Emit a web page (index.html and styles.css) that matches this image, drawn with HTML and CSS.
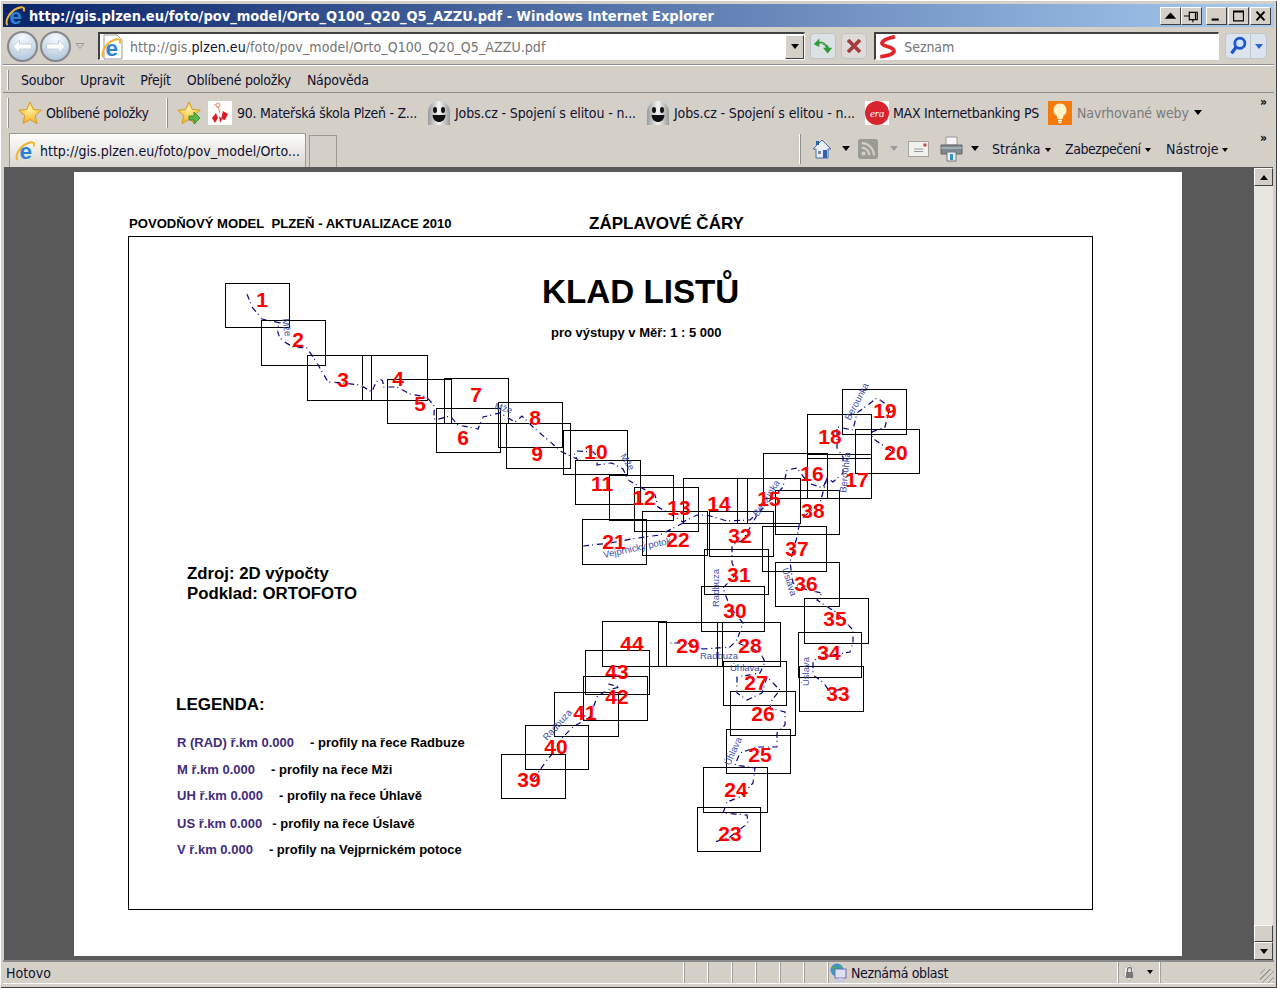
FILE: index.html
```html
<!DOCTYPE html>
<html>
<head>
    <title>http://gis.plzen.eu/foto/pov_model/Orto_Q100_Q20_Q5_AZZU.pdf - Windows Internet Explorer</title>
    <link rel="stylesheet" href="styles.css">
</head>
<body>
<svg class="icon-defs" width="0" height="0">
    <defs>
        <radialGradient id="ball" cx="50%" cy="20%" r="85%"><stop offset="0" stop-color="#f6f9fd"/><stop offset=".55" stop-color="#cfdcea"/><stop offset="1" stop-color="#a9c0d6"/></radialGradient>
        <radialGradient id="gold" cx="50%" cy="35%" r="70%"><stop offset="0" stop-color="#fff2a0"/><stop offset="1" stop-color="#f3a91a"/></radialGradient>
        <linearGradient id="ghost" x1="0" x2="1"><stop offset="0" stop-color="#9a9a9a"/><stop offset=".5" stop-color="#f4f4f4"/><stop offset="1" stop-color="#9a9a9a"/></linearGradient>
        <symbol id="ie" viewBox="0 0 24 24">
            <text x="13" y="21" class="ie-glyph">e</text>
            <path d="M3 23C-1 17 7 4 19 1.500c4-.5 4.500 2 3.500 5" fill="none" stroke="#eeb52e" stroke-width="2.400"/>
        </symbol>
        <symbol id="back" viewBox="0 0 31 31">
            <circle cx="15.500" cy="15.500" r="14.500" fill="url(#ball)" stroke="#85878a" stroke-width="2"/>
            <path d="M6 15.500l6.500-6.500v4h12v5h-12v4z" fill="#fff" stroke="#b8c6d4" stroke-width=".8"/>
        </symbol>
        <symbol id="star" viewBox="0 0 24 24">
            <path d="M12 1l3.300 7.400 8 .8-6 5.400 1.700 8L12 18.500l-7 4.100 1.700-8-6-5.400 8-.8z" fill="url(#gold)" stroke="#d79a26"/>
        </symbol>
        <symbol id="ghost-face" viewBox="0 0 24 24">
            <rect width="24" height="24" fill="#cfcfcb"/>
            <path d="M1 24V11a11 11 0 0 1 22 0v13z" fill="url(#ghost)"/>
            <ellipse cx="8" cy="9" rx="2" ry="3" fill="#111"/><ellipse cx="16" cy="9" rx="2" ry="3" fill="#111"/>
            <path d="M5.500 14h13c-.5 5-3.500 7-6.500 7s-6-2-6.500-7z" fill="#111"/>
        </symbol>
    </defs>
</svg>

<div class="window">
    <div class="titlebar">
        <svg class="title-ie"><use href="#ie"/></svg>
        <span class="title-text">http://gis.plzen.eu/foto/pov_model/Orto_Q100_Q20_Q5_AZZU.pdf - Windows Internet Explorer</span>
        <div class="caption-group">
            <button class="caption-btn"><svg viewBox="0 0 21 18"><path d="M4 12l6.500-7 6.500 7z" fill="#000"/></svg></button>
            <button class="caption-btn"><svg viewBox="0 0 21 18"><path d="M2 9h6M8 4v10M8 5h9v8H8M12 13v3M15 5v8" fill="none" stroke="#000" stroke-width="1.300"/></svg></button>
        </div>
        <div class="caption-group caption-group-wide">
            <button class="caption-btn"><svg viewBox="0 0 21 18"><path d="M5 13h8" stroke="#000" stroke-width="2.400"/></svg></button>
            <button class="caption-btn"><svg viewBox="0 0 21 18"><path d="M5 3.500h11v11H5zM5 4.500h11" fill="none" stroke="#000" stroke-width="1.300"/></svg></button>
            <button class="caption-btn"><svg viewBox="0 0 21 18"><path d="M6 4l9 10M15 4l-9 10" stroke="#000" stroke-width="2.200"/></svg></button>
        </div>
    </div>

    <div class="address-row">
        <svg class="nav-ball"><use href="#back"/></svg>
        <svg class="nav-ball nav-forward"><use href="#back"/></svg>
        <svg class="nav-chevron" viewBox="0 0 10 8"><path d="M1 1.500l4 5 4-5z" fill="#d4d0c8" stroke="#999"/></svg>
        <div class="address-box">
            <svg class="address-ie" viewBox="0 0 24 26">
                <path d="M3 1h13l5 5v19H3z" fill="#fff" stroke="#999"/>
                <use href="#ie" x="0" y="4" width="20" height="20"/>
            </svg>
            <span class="address-url">http://gis.<b>plzen.eu</b>/foto/pov_model/Orto_Q100_Q20_Q5_AZZU.pdf</span>
            <span class="address-drop"><i class="arrow-down"></i></span>
        </div>
        <button class="soft-btn">
            <svg viewBox="0 0 26 26">
                <path d="M3 11l6-6v3.500c3 0 6 .5 7 3-2-1-4-1.500-7-1V14z" fill="#2e9c35"/>
                <path d="M23 15l-5 6-5-6h3c0-2-1-3-4-4 4-.5 7 1 7.500 4z" fill="#2e9c35"/>
            </svg>
        </button>
        <button class="soft-btn soft-btn-stop">
            <svg viewBox="0 0 26 26"><path d="M6.500 6.500l13 13M19.500 6.500l-13 13" stroke="#a63a3c" stroke-width="4"/></svg>
        </button>
        <div class="search-box">
            <svg class="seznam-logo" viewBox="0 0 24 28"><path d="M20 2C12 4 5 6 5 9.500c0 4 14 4 14 9 0 4-8 6-16 7" fill="none" stroke="#e2242b" stroke-width="4.500"/></svg>
            <span class="search-text">Seznam</span>
        </div>
        <div class="search-btn">
            <svg viewBox="0 0 26 26"><circle cx="15" cy="10" r="5.500" fill="#cfe2ff" stroke="#1b55d0" stroke-width="3"/><path d="M11 14l-5 7" stroke="#1b55d0" stroke-width="3.600"/></svg>
            <span class="search-drop"><i class="arrow-down arrow-blue"></i></span>
        </div>
    </div>

    <div class="menu-row">
        <i class="grip"></i>
        <span>Soubor</span><span>Upravit</span><span>Přejít</span><span>Oblíbené položky</span><span>Nápověda</span>
    </div>

    <div class="favorites-row">
        <i class="grip grip-tall"></i>
        <div class="fav-item"><svg class="fav-icon"><use href="#star"/></svg><span>Oblíbené položky</span></div>
        <i class="grip grip-tall"></i>
        <svg class="fav-icon" viewBox="0 0 24 24">
            <use href="#star"/>
            <path d="M12 15h5v-4l6 6-6 6v-4h-5z" fill="#58b84a" stroke="#2f7f2a" stroke-width=".8"/>
        </svg>
        <div class="fav-item fav-narrow">
            <svg class="fav-icon" viewBox="0 0 24 24">
                <rect width="24" height="24" fill="#fff"/>
                <circle cx="10" cy="4" r="2" fill="none" stroke="#e98a6a"/>
                <path d="M10 6l2 6M6 3l4 4" stroke="#e98a6a"/>
                <path d="M8 12l-4 5 3 5 3-5zM15 10l-2 8 4 1 3-6zM11 15l1 7 2-4z" fill="#d8202a"/>
            </svg>
            <span>90. Mateřská škola Plzeň - Z...</span>
        </div>
        <div class="fav-item fav-tight"><svg class="fav-icon"><use href="#ghost-face"/></svg><span>Jobs.cz - Spojení s elitou - n...</span></div>
        <div class="fav-item fav-tight"><svg class="fav-icon"><use href="#ghost-face"/></svg><span>Jobs.cz - Spojení s elitou - n...</span></div>
        <div class="fav-item fav-tight fav-narrow">
            <svg class="fav-icon" viewBox="0 0 24 24">
                <rect width="24" height="24" fill="#fff"/>
                <circle cx="12" cy="12" r="12" fill="#d9232e"/>
                <text x="12" y="15.500" class="era-text">era</text>
            </svg>
            <span>MAX Internetbanking PS</span>
        </div>
        <div class="fav-item fav-muted">
            <svg class="fav-icon" viewBox="0 0 24 24">
                <rect width="24" height="24" fill="#f5780a"/>
                <path d="M12 2.500a6.500 6.500 0 0 0-3.500 12l1 3.500h5l1-3.500a6.500 6.500 0 0 0-3.500-12z" fill="#fff3c8"/>
                <path d="M10 19.500h4M10.500 21.500h3" stroke="#fff" stroke-width="1.400"/>
            </svg>
            <span>Navrhované weby</span>
            <i class="arrow-down"></i>
        </div>
        <span class="more-mark">»</span>
    </div>

    <div class="tabs-row">
        <div class="tab"><svg class="tab-ie"><use href="#ie"/></svg><span>http://gis.plzen.eu/foto/pov_model/Orto...</span></div>
        <div class="tab-new"></div>
        <div class="commands">
            <i class="grip grip-tall"></i>
            <svg class="cmd-icon" viewBox="0 0 20 20">
                <path d="M10 1L1 10h3v9h12v-9h3z" fill="#e8eef6" stroke="#4a6fa5"/>
                <path d="M4 2h3v4H4z" fill="#2a5fb0"/>
                <path d="M6 12h3v3H6z" fill="#7f8c9c"/><path d="M11 11h4v8h-4z" fill="#2f62b5"/>
            </svg>
            <i class="arrow-down arrow-big"></i>
            <svg class="cmd-icon" viewBox="0 0 22 22">
                <rect width="22" height="22" rx="3" fill="#9b9b96"/>
                <circle cx="6" cy="16" r="2.200" fill="#d4d0c8"/>
                <path d="M4 9.500A8.500 8.500 0 0 1 12.500 18M4 4.500A13.500 13.500 0 0 1 17.500 18" fill="none" stroke="#d4d0c8" stroke-width="2.400"/>
            </svg>
            <i class="arrow-down arrow-big arrow-grey"></i>
            <svg class="cmd-icon" viewBox="0 0 21 16">
                <rect x=".5" y=".5" width="20" height="15" fill="#f1f1ee" stroke="#a5a5a0"/>
                <path d="M6 8h9M6 10.500h9" stroke="#999"/>
                <rect x="15.500" y="2.500" width="3" height="3" fill="#c94444"/>
            </svg>
            <svg class="cmd-icon" viewBox="0 0 23 26">
                <path d="M6 1h11v8H6z" fill="#f5f5f5" stroke="#999"/>
                <path d="M1 9h21v9H1z" fill="#7f8992" stroke="#666"/>
                <path d="M1 12h21" stroke="#c5ccd3"/>
                <path d="M7 16h9v9H7z" fill="#eef" stroke="#777"/>
                <path d="M10 18h3v6h-3z" fill="#2a9ac0"/>
                <circle cx="19.500" cy="11" r="1" fill="#6fc04a"/>
            </svg>
            <i class="arrow-down arrow-big"></i>
            <div class="cmd-menu">Stránka<i class="arrow-down arrow-small"></i></div>
            <div class="cmd-menu cmd-menu-narrow">Zabezpečení<i class="arrow-down arrow-small"></i></div>
            <div class="cmd-menu">Nástroje<i class="arrow-down arrow-small"></i></div>
            <span class="more-mark">»</span>
        </div>
    </div>

    <div class="viewport">
        <div class="doc-area">
            <div class="pdf-page">
                <div class="sheet-head">
                    <span class="sheet-project">POVODŇOVÝ MODEL&nbsp; PLZEŇ - AKTUALIZACE 2010</span>
                    <span class="sheet-name">ZÁPLAVOVÉ ČÁRY</span>
                </div>
                <div class="sheet-frame">
                    <svg class="klad-map" viewBox="129 237 963 672">
                        <g class="tiles">
                            <rect x="225.500" y="283.500" width="64" height="44"/>
                            <rect x="261.500" y="320.500" width="64" height="45"/>
                            <rect x="307.500" y="355.500" width="64" height="45"/>
                            <rect x="362.500" y="355.500" width="65" height="45"/>
                            <rect x="387.500" y="379.500" width="64" height="44"/>
                            <rect x="436.500" y="408.500" width="64" height="44"/>
                            <rect x="444.500" y="378.500" width="64" height="45"/>
                            <rect x="498.500" y="402.500" width="64" height="45"/>
                            <rect x="506.500" y="423.500" width="64" height="45"/>
                            <rect x="563.500" y="430.500" width="64" height="44"/>
                            <rect x="575.500" y="460.500" width="65" height="44"/>
                            <rect x="609.500" y="475.500" width="64" height="45"/>
                            <rect x="634.500" y="487.500" width="64" height="44"/>
                            <rect x="683.500" y="478.500" width="64" height="45"/>
                            <rect x="737.500" y="478.500" width="63" height="45"/>
                            <rect x="763.500" y="453.500" width="64" height="45"/>
                            <rect x="807.500" y="454.500" width="64" height="44"/>
                            <rect x="807.500" y="414.500" width="64" height="44"/>
                            <rect x="842.500" y="389.500" width="64" height="45"/>
                            <rect x="855.500" y="429.500" width="64" height="44"/>
                            <rect x="582.500" y="519.500" width="64" height="45"/>
                            <rect x="642.500" y="511.500" width="65" height="44"/>
                            <rect x="709.500" y="511.500" width="64" height="45"/>
                            <rect x="704.500" y="549.500" width="64" height="45"/>
                            <rect x="701.500" y="586.500" width="63" height="45"/>
                            <rect x="762.500" y="526.500" width="64" height="45"/>
                            <rect x="775.500" y="490.500" width="64" height="44"/>
                            <rect x="775.500" y="562.500" width="64" height="44"/>
                            <rect x="804.500" y="598.500" width="64" height="45"/>
                            <rect x="602.500" y="621.500" width="64" height="45"/>
                            <rect x="658.500" y="622.500" width="64" height="44"/>
                            <rect x="717.500" y="622.500" width="63" height="44"/>
                            <rect x="723.500" y="661.500" width="63" height="44"/>
                            <rect x="730.500" y="691.500" width="65" height="44"/>
                            <rect x="726.500" y="729.500" width="64" height="44"/>
                            <rect x="703.500" y="767.500" width="64" height="45"/>
                            <rect x="697.500" y="807.500" width="63" height="44"/>
                            <rect x="585.500" y="650.500" width="64" height="44"/>
                            <rect x="583.500" y="676.500" width="64" height="44"/>
                            <rect x="554.500" y="692.500" width="64" height="44"/>
                            <rect x="525.500" y="725.500" width="63" height="44"/>
                            <rect x="501.500" y="754.500" width="64" height="44"/>
                            <rect x="798.500" y="632.500" width="63" height="45"/>
                            <rect x="799.500" y="666.500" width="64" height="45"/>
                        </g>
                        <g class="rivers" id="rivers">
                            <path d="M247 294L252 307L262 319L280 323Q274 332 283 341L293 347L307 348L317 363L328 382L343 383L360 385L372 392Q376 380 380 379Q384 380 383 387L397 387L410 394L427 397L435 407Q433 414 435 420L450 416L458 425L478 429L483 417L500 413L515 422L522 416L533 427L562 452L577 459Q572 452 577 451L593 452Q598 455 597 465L612 463L623 469L628 480L640 487L655 495L658 507L672 515L683 522L697 515L707 515L727 521L750 520L763 508L783 487L787 470L797 468L808 483L823 488L827 478L833 482L843 473L843 457L837 448L837 427L853 430L857 413L877 398L890 407L885 427L872 432L872 438L905 460"/>
                            <path d="M583 546L610 543L637 538L660 535L683 523"/>
                            <path d="M757 515L743 540L732 545L732 563L737 573L723 588L730 607L743 623L737 640L730 647L703 649L687 643L667 643"/>
                            <path d="M827 478L820 503L800 520L797 537L790 562L793 583L807 590L822 593L817 600L837 613L853 630L853 643L850 652L833 655L813 660L813 675L823 682L830 692L848 687"/>
                            <path d="M738 643L760 652L765 662L760 673L737 677L737 693L747 700L762 693L767 677L780 690L772 700L770 708L785 712L785 725L777 733L777 747L757 747L740 753L735 765L755 768L753 783L740 797L727 802L723 813L747 815L748 823L730 837L715 842"/>
                            <path d="M608 684L620 687L607 690L597 697L590 717L573 727L562 738L553 753L547 760L533 780"/>
                        </g>
                        <use href="#rivers" class="river-ticks"/>
                        <g class="river-names">
                            <text transform="translate(282 319) rotate(80)">Mže</text>
                            <text transform="translate(494 409) rotate(15)">Mže</text>
                            <text transform="translate(620 456) rotate(58)">Mže</text>
                            <text transform="translate(850 421) rotate(-62)">Berounka</text>
                            <text transform="translate(846 493) rotate(-84)">Berounka</text>
                            <text transform="translate(758 517) rotate(-57)">Berounka</text>
                            <text transform="translate(604 558) rotate(-12)">Vejprnický potok</text>
                            <text transform="translate(719 607) rotate(-90)">Radbuza</text>
                            <text transform="translate(782 569) rotate(72)">Úslava</text>
                            <text transform="translate(700 659)">Radbuza</text>
                            <text transform="translate(730 671)">Úhlava</text>
                            <text transform="translate(809 686) rotate(-90)">Úslava</text>
                            <text transform="translate(547 741) rotate(-48)">Radbuza</text>
                            <text transform="translate(730 766) rotate(-66)">Úhlava</text>
                        </g>
                        <g class="tile-nums">
                            <text x="262" y="307">1</text><text x="298" y="347">2</text><text x="343" y="387">3</text>
                            <text x="398" y="386">4</text><text x="420" y="411">5</text><text x="463" y="445">6</text>
                            <text x="476" y="402">7</text><text x="535" y="425">8</text><text x="537" y="461">9</text>
                            <text x="596" y="459">10</text><text x="602" y="491">11</text><text x="644" y="505">12</text>
                            <text x="679" y="515">13</text><text x="719" y="511">14</text><text x="769" y="506">15</text>
                            <text x="812" y="481">16</text><text x="857" y="487">17</text><text x="830" y="444">18</text>
                            <text x="885" y="418">19</text><text x="896" y="460">20</text><text x="614" y="549">21</text>
                            <text x="678" y="547">22</text><text x="730" y="841">23</text><text x="736" y="797">24</text>
                            <text x="760" y="762">25</text><text x="763" y="721">26</text><text x="756" y="690">27</text>
                            <text x="750" y="653">28</text><text x="688" y="653">29</text><text x="735" y="618">30</text>
                            <text x="739" y="582">31</text><text x="740" y="543">32</text><text x="838" y="701">33</text>
                            <text x="829" y="660">34</text><text x="835" y="626">35</text><text x="806" y="591">36</text>
                            <text x="797" y="556">37</text><text x="813" y="518">38</text><text x="529" y="787">39</text>
                            <text x="556" y="754">40</text><text x="585" y="720">41</text><text x="617" y="704">42</text>
                            <text x="617" y="679">43</text><text x="632" y="651">44</text>
                        </g>
                    </svg>
                    <h1 class="sheet-title">KLAD LISTŮ</h1>
                    <p class="sheet-scale">pro výstupy v Měř: 1 : 5 000</p>
                    <p class="sheet-source">Zdroj: 2D výpočty<br>Podklad: ORTOFOTO</p>
                    <h2 class="legend-title">LEGENDA:</h2>
                    <div class="legend-row"><b>R (RAD) ř.km 0.000</b><span>- profily na řece Radbuze</span></div>
                    <div class="legend-row"><b>M ř.km 0.000</b><span>- profily na řece Mži</span></div>
                    <div class="legend-row"><b>UH ř.km 0.000</b><span>- profily na řece Úhlavě</span></div>
                    <div class="legend-row legend-row-us"><b>US ř.km 0.000</b><span>- profily na řece Úslavě</span></div>
                    <div class="legend-row"><b>V ř.km 0.000</b><span>- profily na Vejprnickém potoce</span></div>
                </div>
            </div>
        </div>
        <div class="scrollbar">
            <div class="scroll-btn"><i class="arrow-up"></i></div>
            <div class="scroll-track"></div>
            <div class="scroll-thumb"></div>
            <div class="scroll-btn"><i class="arrow-down"></i></div>
        </div>
    </div>

    <div class="statusbar">
        <div class="status-cell status-main">Hotovo</div>
        <div class="status-cell status-slot"></div>
        <div class="status-cell status-slot"></div>
        <div class="status-cell status-slot"></div>
        <div class="status-cell status-slot"></div>
        <div class="status-cell status-slot"></div>
        <div class="status-cell status-slot"></div>
        <div class="status-cell status-zone">
            <svg class="zone-icon" viewBox="0 0 18 20">
                <circle cx="8" cy="7" r="6.500" fill="#3f8fd8"/>
                <path d="M3 3l5 1 1 4-4 2zM10 1l3 3-2 2z" fill="#49b04a"/>
                <rect x="6" y="6" width="11" height="9" fill="#dfe0f2" stroke="#6a6fb0"/>
                <path d="M9 15h5l2 4H7z" fill="#c5c9e8"/>
            </svg>
            <span>Neznámá oblast</span>
        </div>
        <div class="status-cell status-lock">
            <svg class="lock-icon" viewBox="0 0 16 18">
                <path d="M3 4l5-3 5 3v7l-5 6-5-6z" fill="#ecebe6" stroke="#b9b9b2"/>
                <rect x="5" y="8" width="7" height="6" fill="#777"/>
                <path d="M6.500 8V5.500a2 2 0 0 1 4 0V8" fill="none" stroke="#777" stroke-width="1.300"/>
            </svg>
            <i class="arrow-down arrow-small"></i>
        </div>
        <div class="status-cell status-grip"></div>
    </div>
</div>
</body>
</html>
```

FILE: styles.css
```css
* {
    box-sizing: border-box;
}

body {
    margin: 0;
    background-color: #d4d0c8;
    font-family: "DejaVu Sans Condensed", "DejaVu Sans", sans-serif;
    font-size: 14px;
    color: #101030;
    overflow: hidden;
}

.icon-defs {
    position: absolute;
}

.ie-glyph {
    fill: #2b83d8;
    font-family: "Liberation Sans", sans-serif;
    font-weight: bold;
    font-size: 27px;
    text-anchor: middle;
}

.window {
    width: 1277px;
    height: 988px;
    padding: 4px 3px 3px 3px;
    display: flex;
    flex-direction: column;
    background-color: #d4d0c8;
    box-shadow: inset 1px 1px 0 #fff, inset -1px -1px 0 #404040;
}

/* title bar */
.titlebar {
    height: 23px;
    margin-bottom: 1px;
    padding: 0 3px 0 2px;
    display: flex;
    align-items: center;
    background: linear-gradient(to right, #0a246a, #a6caf0);
}

.title-ie {
    width: 20px;
    height: 20px;
    flex: none;
}

.title-text {
    margin-left: 4px;
    flex: 1;
    color: #fff;
    font-weight: bold;
    font-size: 14.500px;
    white-space: nowrap;
}

.caption-group {
    display: flex;
    margin-left: 4px;
}

.caption-group-wide {
    gap: 1px;
}

.caption-btn {
    width: 21px;
    height: 18px;
    padding: 0;
    border: 1px solid;
    border-color: #fff #404040 #404040 #fff;
    background-color: #d4d0c8;
}

.caption-btn svg {
    display: block;
    width: 19px;
    height: 16px;
}

/* address row */
.address-row {
    height: 38px;
    padding: 1px 7px 2px 4px;
    display: flex;
    align-items: center;
    border-bottom: 1px solid #fff;
    box-shadow: inset 0 -1px 0 #8c8c8c;
}

.nav-ball {
    width: 31px;
    height: 31px;
    flex: none;
}

.nav-forward {
    margin-left: 2px;
    transform: scaleX(-1);
}

.nav-chevron {
    width: 10px;
    height: 8px;
    margin: 0 13px 0 4px;
    flex: none;
}

.address-box {
    width: 708px;
    height: 28px;
    display: flex;
    align-items: center;
    background-color: #fff;
    border: 1px solid;
    border-width: 2px 1px 1px 2px;
    border-color: #404040 #fff #fff #404040;
}

.address-ie {
    width: 24px;
    height: 26px;
    margin-left: 1px;
    flex: none;
}

.address-url {
    margin-left: 5px;
    flex: 1;
    color: #757575;
    letter-spacing: .08px;
    white-space: nowrap;
}

.address-url b {
    color: #101030;
    font-weight: normal;
}

.address-drop {
    width: 19px;
    height: 24px;
    display: flex;
    align-items: center;
    justify-content: center;
    background-color: #d4d0c8;
    border: 1px solid;
    border-color: #fff #404040 #404040 #fff;
}

.soft-btn {
    width: 26px;
    height: 26px;
    margin-left: 5px;
    padding: 0;
    flex: none;
    background-color: #dbe1e4;
    border: 1px solid #bfc3c5;
    border-radius: 4px;
}

.soft-btn-stop {
    background-color: #dedbd8;
}

.soft-btn svg {
    display: block;
    width: 24px;
    height: 24px;
}

.search-box {
    width: 345px;
    height: 28px;
    margin-left: 7px;
    display: flex;
    align-items: center;
    background-color: #fff;
    border: 1px solid;
    border-width: 2px 1px 1px 2px;
    border-color: #404040 #fff #fff #404040;
}

.seznam-logo {
    width: 22px;
    height: 24px;
    margin-left: 1px;
    flex: none;
}

.search-text {
    margin-left: 5px;
    color: #757575;
    letter-spacing: -.1px;
}

.search-btn {
    width: 42px;
    height: 26px;
    margin-left: 6px;
    display: flex;
    flex: none;
    background-color: #dbe4ee;
    border: 1px solid #bfc6cc;
    border-radius: 4px;
}

.search-btn svg {
    width: 24px;
    height: 24px;
}

.search-drop {
    flex: 1;
    display: flex;
    align-items: center;
    justify-content: center;
    border-left: 1px solid #bfc6cc;
}

/* menu and favorites */
.menu-row {
    height: 27px;
    padding: 1px 0 0 4px;
    display: flex;
    align-items: center;
    gap: 16px;
    letter-spacing: -.25px;
    border-bottom: 1px solid #8c8c8c;
}

.menu-row .grip {
    margin-right: -4px;
}

.grip {
    width: 2px;
    height: 20px;
    flex: none;
    border-left: 1px solid #fff;
    border-right: 1px solid #8c8c8c;
}

.grip-tall {
    height: 30px;
}

.favorites-row {
    height: 38px;
    padding: 1px 0 0 4px;
    display: grid;
    grid-template-columns: 11px 148px 11px 31px 219px 219px 219px 183px 212px 14px;
    align-items: center;
}

.fav-item {
    display: flex;
    align-items: center;
    gap: 5px;
    letter-spacing: -.12px;
    white-space: nowrap;
}

.fav-item:first-of-type {
    letter-spacing: -.35px;
    gap: 4px;
}

.fav-narrow {
    letter-spacing: -.28px;
}

.fav-tight {
    gap: 4px;
}

.fav-muted {
    gap: 5px;
    color: #7a7a7a;
}

.fav-icon {
    width: 24px;
    height: 24px;
    flex: none;
}

.era-text {
    fill: #fff;
    font-family: "Liberation Serif", serif;
    font-style: italic;
    font-size: 11px;
    text-anchor: middle;
}

.more-mark {
    align-self: start;
    font-weight: bold;
    font-size: 12px;
    line-height: 14px;
    color: #000;
}

.favorites-row .more-mark {
    margin-top: 1px;
}

.arrow-down,
.arrow-up {
    display: inline-block;
    width: 0;
    height: 0;
    flex: none;
    border-left: 4px solid transparent;
    border-right: 4px solid transparent;
}

.arrow-down {
    border-top: 5px solid #000;
}

.arrow-up {
    border-bottom: 5px solid #000;
}

.arrow-blue {
    border-top-color: #2a62d8;
}

.arrow-grey {
    border-top-color: #9a9a9a;
}

.arrow-big {
    margin-top: -2px;
}

.arrow-small {
    margin-left: 4px;
    margin-bottom: 2px;
    border-left-width: 3.500px;
    border-right-width: 3.500px;
    border-top-width: 4px;
}

/* tabs row */
.tabs-row {
    height: 36px;
    padding-left: 6px;
    display: flex;
    align-items: flex-end;
}

.tab {
    width: 297px;
    height: 34px;
    padding-left: 5px;
    display: flex;
    align-items: center;
    gap: 5px;
    white-space: nowrap;
    background: linear-gradient(to bottom, #fdfdfc, #d8d6cf);
    border: 1px solid #9a9a94;
    border-bottom: none;
}

.tab-ie {
    width: 20px;
    height: 20px;
    flex: none;
}

.tab-new {
    width: 28px;
    height: 32px;
    margin-left: 3px;
    background-color: #d4d0c8;
    border: 1px solid #9a9a94;
    border-bottom: none;
}

.commands {
    width: 475px;
    height: 36px;
    margin-left: auto;
    display: grid;
    grid-template-columns: 13px 30px 16px 32px 18px 32px 31px 21px 73px 101px 94px 14px;
    align-items: center;
}

.cmd-icon {
    width: 20px;
    height: 20px;
}

.cmd-icon:nth-of-type(3) {
    width: 21px;
    height: 16px;
}

.cmd-icon:nth-of-type(4) {
    width: 23px;
    height: 26px;
}

.cmd-menu {
    white-space: nowrap;
}

.cmd-menu-narrow {
    letter-spacing: -.45px;
}

/* document */
.viewport {
    height: 793px;
    margin: 0 1px;
    display: flex;
    background-color: #595959;
}

.doc-area {
    width: 1250px;
    padding: 5px 0 0 70px;
}

.pdf-page {
    width: 1108px;
    height: 784px;
    padding: 44px 0 0 54px;
    background-color: #fff;
    font-family: "Liberation Sans", Arial, sans-serif;
    color: #000;
    font-weight: bold;
}

.sheet-head {
    height: 20px;
    padding-left: 1px;
    display: flex;
    align-items: flex-start;
}

.sheet-project {
    width: 460px;
    font-size: 13.100px;
    line-height: 16px;
    white-space: nowrap;
}

.sheet-name {
    font-size: 17px;
    line-height: 16px;
}

.sheet-frame {
    position: relative;
    width: 965px;
    height: 674px;
    padding-top: 34px;
    border: 1px solid #000;
}

.klad-map {
    position: absolute;
    left: 0;
    top: 0;
    width: 963px;
    height: 672px;
}

.tiles rect {
    fill: none;
    stroke: #000;
    stroke-width: 1;
}

.rivers path {
    fill: none;
    stroke: var(--river, #00007f);
    stroke-width: 1.200;
    stroke-dasharray: var(--dash, 6 3 1 4);
}

.river-ticks {
    --river: #f08a8a;
    --dash: 1 27;
}

.river-names text {
    fill: #3c50ac;
    font-size: 9.500px;
    font-weight: normal;
}

.tile-nums text {
    fill: #ff0000;
    font-size: 21px;
    font-weight: bold;
    text-anchor: middle;
}

.sheet-title {
    position: relative;
    margin: 0 0 0 413px;
    font-size: 33.200px;
    line-height: 42px;
    white-space: nowrap;
}

.sheet-scale {
    position: relative;
    margin: 12px 0 0 422px;
    font-size: 13px;
    line-height: 16px;
}

.sheet-source {
    position: relative;
    margin: 223px 0 0 58px;
    font-size: 16.800px;
    line-height: 20px;
}

.legend-title {
    position: relative;
    margin: 91px 0 15px 47px;
    font-size: 17px;
    line-height: 20px;
}

.legend-row {
    position: relative;
    margin-left: 48px;
    display: flex;
    gap: 16px;
    font-size: 13px;
    line-height: 26.500px;
}

.legend-row b {
    color: #3f2c7c;
}

.legend-row-us {
    margin-top: 1px;
    gap: 10px;
}

/* scrollbar */
.scrollbar {
    width: 19px;
    display: flex;
    flex-direction: column;
    padding-top: 1px;
}

.scroll-btn {
    height: 18px;
    display: flex;
    align-items: center;
    justify-content: center;
    background-color: #d4d0c8;
    border: 1px solid;
    border-color: #fff #404040 #404040 #fff;
}

.scroll-track {
    flex: 1;
    background-color: #e8e6e1;
}

.scroll-thumb {
    height: 17px;
    background-color: #d4d0c8;
    border: 1px solid;
    border-color: #fff #404040 #404040 #fff;
}

/* status bar */
.statusbar {
    height: 25px;
    display: flex;
    border-top: 2px solid #8c8c8c;
}

.status-cell {
    height: 22px;
    display: flex;
    align-items: center;
    border-right: 1px solid #fff;
    border-bottom: 1px solid #fff;
    box-shadow: 1px 0 0 #a0a0a0;
}

.status-main {
    width: 681px;
    padding-left: 3px;
}

.status-slot {
    width: 24px;
}

.status-zone {
    width: 290px;
    gap: 4px;
    padding-left: 1px;
    letter-spacing: -.35px;
}

.zone-icon {
    width: 18px;
    height: 20px;
}

.status-lock {
    width: 42px;
    gap: 6px;
    padding-left: 3px;
}

.lock-icon {
    width: 16px;
    height: 18px;
}

.status-grip {
    flex: 1;
    border-right: none;
    box-shadow: none;
    background: repeating-linear-gradient(135deg, transparent 0 3px, #9a9a94 3px 4px) right bottom / 14px 14px no-repeat;
}
```
